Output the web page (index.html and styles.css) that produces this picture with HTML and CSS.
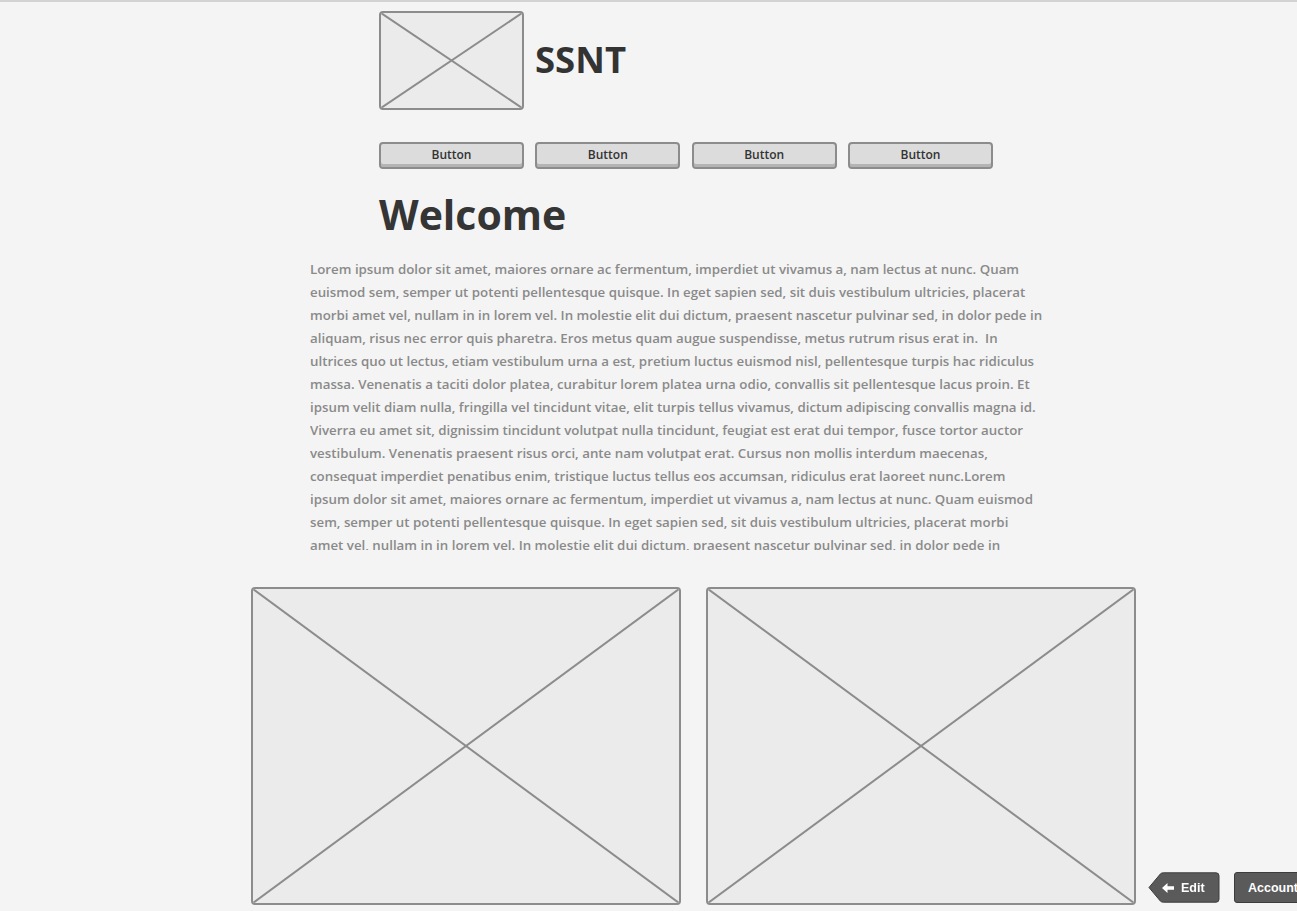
FILE: index.html
```html
<!DOCTYPE html>
<html lang="en">
<head>
<meta charset="utf-8">
<title>SSNT</title>
<link rel="stylesheet" href="styles.css">
</head>
<body>
<div class="page">
  <header class="header">
    <div class="ph logo">
      <svg viewBox="0 0 100 100" preserveAspectRatio="none"><line x1="0" y1="0" x2="100" y2="100"/><line x1="100" y1="0" x2="0" y2="100"/></svg>
    </div>
    <h1 class="brand">SSNT</h1>
  </header>
  <nav class="nav">
    <button class="btn">Button</button>
    <button class="btn">Button</button>
    <button class="btn">Button</button>
    <button class="btn">Button</button>
  </nav>
  <h2 class="welcome">Welcome</h2>
  <div class="text">
    <p>Lorem ipsum dolor sit amet, maiores ornare ac fermentum, imperdiet ut vivamus a, nam lectus at nunc. Quam<br>
euismod sem, semper ut potenti pellentesque quisque. In eget sapien sed, sit duis vestibulum ultricies, placerat<br>
morbi amet vel, nullam in in lorem vel. In molestie elit dui dictum, praesent nascetur pulvinar sed, in dolor pede in<br>
aliquam, risus nec error quis pharetra. Eros metus quam augue suspendisse, metus rutrum risus erat in.&nbsp; In<br>
ultrices quo ut lectus, etiam vestibulum urna a est, pretium luctus euismod nisl, pellentesque turpis hac ridiculus<br>
massa. Venenatis a taciti dolor platea, curabitur lorem platea urna odio, convallis sit pellentesque lacus proin. Et<br>
ipsum velit diam nulla, fringilla vel tincidunt vitae, elit turpis tellus vivamus, dictum adipiscing convallis magna id.<br>
Viverra eu amet sit, dignissim tincidunt volutpat nulla tincidunt, feugiat est erat dui tempor, fusce tortor auctor<br>
vestibulum. Venenatis praesent risus orci, ante nam volutpat erat. Cursus non mollis interdum maecenas,<br>
consequat imperdiet penatibus enim, tristique luctus tellus eos accumsan, ridiculus erat laoreet nunc.Lorem<br>
ipsum dolor sit amet, maiores ornare ac fermentum, imperdiet ut vivamus a, nam lectus at nunc. Quam euismod<br>
sem, semper ut potenti pellentesque quisque. In eget sapien sed, sit duis vestibulum ultricies, placerat morbi<br>
amet vel, nullam in in lorem vel. In molestie elit dui dictum, praesent nascetur pulvinar sed, in dolor pede in</p>
  </div>
  <div class="gallery">
    <div class="ph big">
      <svg viewBox="0 0 100 100" preserveAspectRatio="none"><line x1="0" y1="0" x2="100" y2="100"/><line x1="100" y1="0" x2="0" y2="100"/></svg>
    </div>
    <div class="ph big">
      <svg viewBox="0 0 100 100" preserveAspectRatio="none"><line x1="0" y1="0" x2="100" y2="100"/><line x1="100" y1="0" x2="0" y2="100"/></svg>
    </div>
  </div>
</div>
<div class="tools">
  <a class="tool edit">
    <svg class="tag" viewBox="0 0 72 31" width="72" height="31"><path d="M1 15.5 L12.5 1.8 Q13.5 0.8 15.5 0.8 H68 Q71 0.8 71 3.8 V27.2 Q71 30.2 68 30.2 H15.5 Q13.5 30.2 12.5 29.2 Z"/></svg>
    <svg class="arrow" viewBox="0 0 12 10" width="12" height="10"><path d="M0 5 L5.5 0 V3.2 H12 V6.8 H5.5 V10 Z"/></svg>
    <span>Edit</span>
  </a>
  <a class="tool account"><span>Account</span></a>
</div>
</body>
</html>
```
FILE: styles.css
```css
html, body {
  margin: 0;
  padding: 0;
}
body {
  background: #f4f4f4;
  border-top: 2px solid #d3d3d3;
  font-family: "Open Sans", "Liberation Sans", sans-serif;
  color: #333;
  height: 909px;
  overflow: hidden;
}
.page {
  display: flex;
  flex-direction: column;
  padding-left: 251px;
}
.header {
  display: flex;
  align-items: center;
  gap: 11px;
  margin: 9px 0 0 128px;
}
.ph {
  box-sizing: border-box;
  background: #ebebeb;
  border: 2px solid #8c8c8c;
  border-radius: 4px;
  overflow: hidden;
}
.ph svg {
  display: block;
  width: 100%;
  height: 100%;
}
.ph line {
  stroke: #8c8c8c;
  stroke-width: 2;
  vector-effect: non-scaling-stroke;
}
.logo {
  width: 145px;
  height: 99px;
}
.brand {
  margin: 0 0 4px;
  font-size: 36.5px;
  font-weight: 700;
  color: #333;
}
.nav {
  display: flex;
  gap: 11.33px;
  margin: 32px 0 0 128px;
}
.btn {
  box-sizing: border-box;
  width: 145px;
  height: 27px;
  padding: 0 0 2px;
  background: #dcdcdc;
  border: 2px solid #8c8c8c;
  border-radius: 4px;
  box-shadow: inset 0 -3px 0 #b4b4b4;
  font-family: "Open Sans", "Liberation Sans", sans-serif;
  font-size: 12px;
  font-weight: 600;
  color: #333;
}
.welcome {
  margin: 17px 0 0 128px;
  font-size: 41px;
  line-height: 56px;
  font-weight: 700;
  color: #353535;
}
.text {
  margin: 16px 0 0 59px;
  height: 292px;
  overflow: hidden;
}
.text p {
  margin: 0;
  font-size: 13.3px;
  line-height: 23px;
  font-weight: 600;
  color: #8a8a8a;
  white-space: nowrap;
}
.gallery {
  display: flex;
  gap: 25px;
  margin-top: 37px;
}
.big {
  width: 430px;
  height: 318px;
}
.tools {
  position: fixed;
  left: 1148px;
  top: 872px;
  display: flex;
  gap: 14px;
}
.tool {
  position: relative;
  display: flex;
  align-items: center;
  height: 31px;
  font-family: "Liberation Sans", Arial, sans-serif;
  font-size: 12.5px;
  font-weight: 700;
  color: #fff;
}
.edit {
  width: 72px;
  padding-left: 14px;
  box-sizing: border-box;
  gap: 7px;
}
.edit span, .edit .arrow {
  position: relative;
}
.tag {
  position: absolute;
  left: 0;
  top: 0;
}
.tag path {
  fill: #5a5a5a;
  stroke: #3c3c3c;
  stroke-width: 1;
}
.arrow path {
  fill: #fff;
}
.account {
  box-sizing: border-box;
  padding: 0 14px 0 13px;
  background: #5a5a5a;
  border: 1px solid #3c3c3c;
  border-radius: 3px;
}
```
